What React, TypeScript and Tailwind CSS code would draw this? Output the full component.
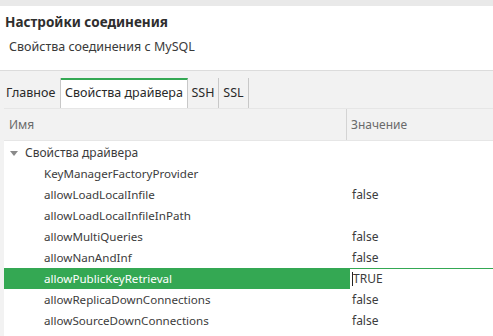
import React from "react";

const rows: [string, string][] = [
  ["KeyManagerFactoryProvider", ""],
  ["allowLoadLocalInfile", "false"],
  ["allowLoadLocalInfileInPath", ""],
  ["allowMultiQueries", "false"],
  ["allowNanAndInf", "false"],
  ["allowPublicKeyRetrieval", "TRUE"],
  ["allowReplicaDownConnections", "false"],
  ["allowSourceDownConnections", "false"],
];

export default function App() {
  return (
    <div
      className="w-[493px] h-[336px] overflow-hidden bg-white text-[#3c3c3c] flex flex-col"
      style={{ fontFamily: '"Noto Sans", "Open Sans", sans-serif' }}
    >
      <div className="h-[6px] bg-[#e9e9e9] shrink-0" />
      <div className="h-[65px] shrink-0 bg-white border-b border-[#dcdcdc] pl-[5px] pt-[7px]">
        <div className="text-[13.5px] font-bold leading-[18px] text-[#2e2e2e]">Настройки соединения</div>
        <div className="text-[12.5px] leading-[18px] mt-[7px] pl-[4px] text-[#3a3a3a]">Свойства соединения с MySQL</div>
      </div>
      <div className="flex-1 bg-[#f2f2f2] pl-[4px] flex flex-col">
        <div className="h-[37px] flex items-end shrink-0 text-[12.5px] text-[#2a2a2a]">
          <div className="h-[30px] px-[2px] flex items-center w-[57px] border-r border-[#c8c8c8]">Главное</div>
          <div className="h-[30px] w-[127px] bg-white border-t-[2px] border-t-[#34a853] border-r border-[#c8c8c8] flex items-center justify-center pb-[1px]">
            Свойства драйвера
          </div>
          <div className="h-[30px] w-[31px] border-r border-[#c8c8c8] flex items-center justify-center">SSH</div>
          <div className="h-[30px] w-[30px] border-r border-[#c8c8c8] flex items-center justify-center">SSL</div>
        </div>
        <div className="flex-1 bg-white flex flex-col text-[12px]">
          <div className="h-[33px] shrink-0 bg-[#f2f2f2] border-t border-[#e6e6e6] border-b border-[#d4d4d4] flex text-[#6a6a6a]">
            <div className="w-[343px] border-r border-[#d4d4d4] flex items-center pl-[5px]">Имя</div>
            <div className="flex-1 flex items-center pl-[4px]">Значение</div>
          </div>
          <div className="h-[21px] mt-[1px] flex items-center pl-[5px] text-[#3c3c3c]">
            <svg width="10" height="10" viewBox="0 0 10 10" className="mr-[6px]">
              <path d="M1 3 L9 3 L5 8 Z" fill="#8a8a8a" />
            </svg>
            Свойства драйвера
          </div>
          {rows.map(([k, v]) => {
            const sel = v === "TRUE";
            return (
              <div key={k} className="h-[21px] flex">
                <div
                  className={
                    "w-[346px] flex items-center pl-[40px] text-[11.6px] " +
                    (sel ? "bg-[#34a853] text-white" : "text-[#3c3c3c]")
                  }
                >
                  {k}
                </div>
                <div
                  className={
                    "flex-1 flex items-center pl-[2px] text-[#3c3c3c] " +
                    (sel ? "border-t border-[#34a853]" : "")
                  }
                >
                  {sel ? (
                    <>
                      <span className="inline-block w-[1px] h-[14px] bg-[#222]" />
                      <span>TRUE</span>
                    </>
                  ) : (
                    v
                  )}
                </div>
              </div>
            );
          })}
        </div>
      </div>
    </div>
  );
}
